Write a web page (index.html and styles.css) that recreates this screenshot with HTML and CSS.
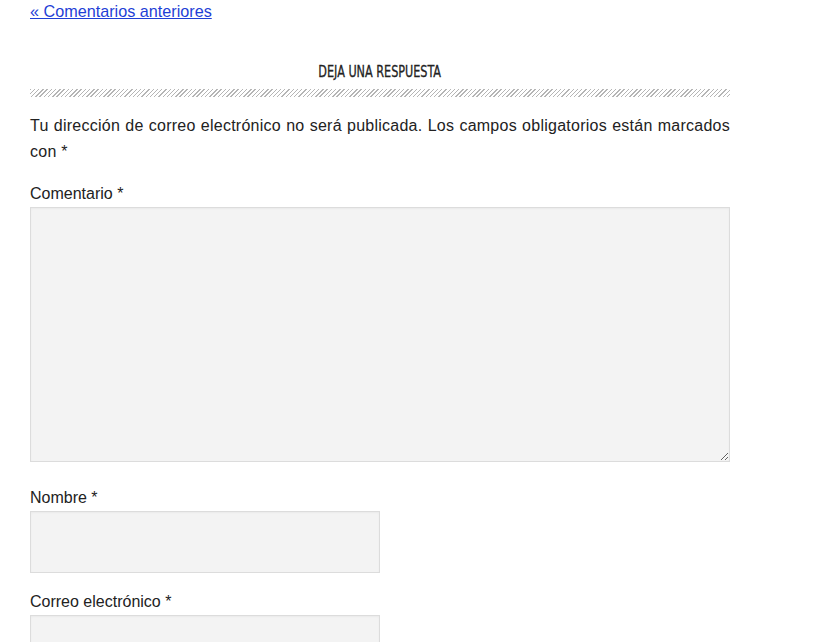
FILE: index.html
```html
<!DOCTYPE html>
<html lang="es">
<head>
  <meta charset="UTF-8">
  <meta name="viewport" content="width=device-width, initial-scale=1.0">
  <title>Deja una respuesta</title>
  <link rel="stylesheet" href="styles.css">
</head>
<body>
  <div class="comments">
    <!-- Older comments link -->
    <div class="nav-previous">
      <a href="#">« Comentarios anteriores</a>
    </div>

    <!-- Reply form -->
    <div class="respond">
      <h3 class="reply-title"><span>Deja una respuesta</span></h3>
      <div class="stripes"></div>

      <form class="comment-form">
        <p class="notes">Tu dirección de correo electrónico no será publicada. Los campos obligatorios están marcados con *</p>

        <div class="field field-comment">
          <label for="comment">Comentario *</label>
          <textarea id="comment" name="comment"></textarea>
        </div>

        <div class="field">
          <label for="author">Nombre *</label>
          <input id="author" name="author" type="text">
        </div>

        <div class="field">
          <label for="email">Correo electrónico *</label>
          <input id="email" name="email" type="email">
        </div>
      </form>
    </div>
  </div>
</body>
</html>
```

FILE: styles.css
```css
body {
  margin: 0;
  font-family: "Liberation Sans", Arial, sans-serif;
  font-size: 16px;
  color: #222;
  background: #fff;
}
.comments {
  width: 700px;
  margin-left: 30px;
}
.nav-previous {
  line-height: 22px;
  font-size: 16.2px;
}
.nav-previous a {
  color: #1f3fd6;
  text-decoration: underline;
}
.respond {
  margin-top: 39px;
}
.reply-title {
  margin: 0;
  font-family: "DejaVu Sans Condensed", "DejaVu Sans", sans-serif;
  font-weight: normal;
  font-size: 16px;
  line-height: 22px;
  text-align: center;
  text-transform: uppercase;
  color: #222;
}
.reply-title span {
  display: inline-block;
  transform: scaleX(0.78);
  -webkit-text-stroke: 0.3px #222;
}
.stripes {
  height: 8px;
  margin-top: 6px;
  background: repeating-linear-gradient(135deg, #b5b5b5 0, #b5b5b5 1px, transparent 1px, transparent 3px);
}
.comment-form {
  margin-top: 16px;
}
.notes {
  margin: 0 0 16px;
  line-height: 26px;
  text-align: justify;
  letter-spacing: 0.25px;
}
.field {
  margin-bottom: 16px;
}
.field-comment {
  margin-bottom: 23px;
}
.field label {
  display: block;
  line-height: 26px;
}
.field textarea,
.field input {
  display: block;
  box-sizing: border-box;
  margin: 0;
  background: #f3f3f3;
  border: 1px solid #dcdcdc;
  box-shadow: inset 0 1px 2px rgba(0, 0, 0, 0.04);
  font: inherit;
}
.field textarea {
  width: 700px;
  height: 255px;
}
.field input {
  width: 350px;
  height: 62px;
}
```
